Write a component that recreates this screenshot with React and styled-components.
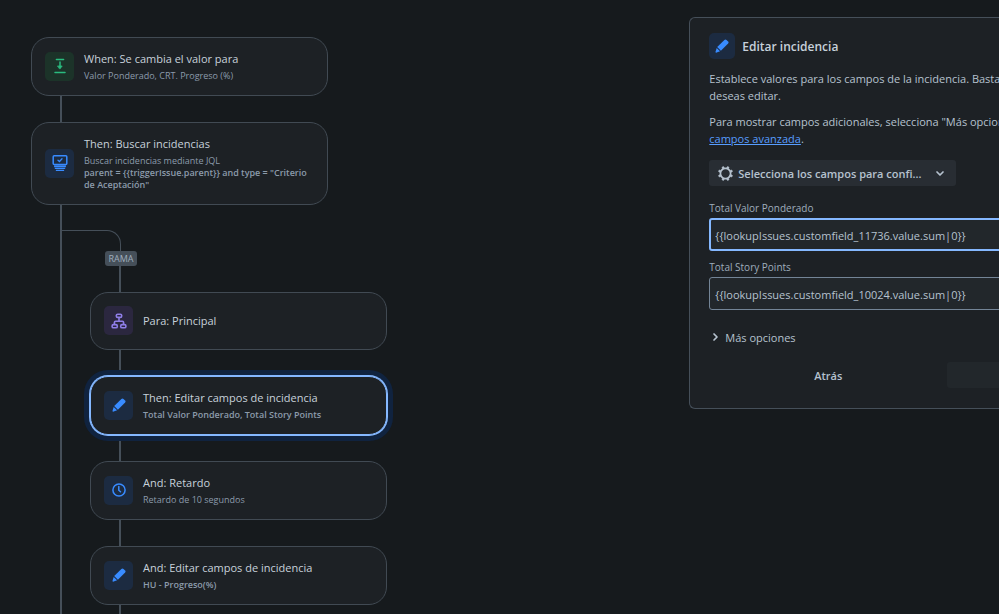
import React, { useState } from 'react';
import styled, { createGlobalStyle, css } from 'styled-components';

const GlobalStyle = createGlobalStyle`
  * {
    box-sizing: border-box;
  }

  body {
    margin: 0;
    background: #161a1d;
    color: #b6c2cf;
    font-family: 'Open Sans', 'Noto Sans', sans-serif;
    font-size: 11px;
  }

  button,
  input {
    font: inherit;
    color: inherit;
  }
`;

const Page = styled.main`
  display: flex;
  align-items: flex-start;
  height: 100vh;
  overflow: hidden;
`;

const Canvas = styled.section`
  flex: 0 0 69%;
  padding: 37px 0 0 31px;
`;

const Connector = styled.div`
  width: 2px;
  height: 26px;
  margin-left: 29px;
  background: #454f59;
`;

const Card = styled.button`
  display: flex;
  align-items: center;
  gap: 10px;
  width: 297px;
  min-height: 58px;
  padding: 12px 13px 13px;
  border: 1px solid #414a53;
  border-radius: 18px;
  background: #1d2125;
  text-align: left;
  cursor: pointer;

  ${props =>
    props.$selected &&
    css`
      position: relative;
      z-index: 1;
      border-color: #85b8ff;
      box-shadow: 0 0 0 1px #85b8ff, 0 0 0 6px #10233f;
    `}
`;

const tones = {
  green: css`
    background: #1c3329;
    color: #2abb7f;
  `,
  blue: css`
    background: #1c2b41;
    color: #388bff;
  `,
  purple: css`
    background: #2b273f;
    color: #8f7ee7;
  `,
};

const IconTile = styled.span`
  display: flex;
  flex: none;
  align-items: center;
  justify-content: center;
  width: ${props => (props.$small ? '26px' : '29px')};
  height: ${props => (props.$small ? '26px' : '29px')};
  border-radius: 5px;
  ${props => tones[props.$tone]}
`;

const CardText = styled.span`
  display: flex;
  flex-direction: column;
  gap: 3px;
`;

const CardTitle = styled.span`
  color: #c7d1db;
  line-height: 17px;
`;

const CardDetail = styled.span`
  color: #8c9bab;
  font-size: 9px;
  line-height: 12px;

  strong {
    display: block;
    font-weight: 600;
    white-space: nowrap;
  }
`;

const Trunk = styled.div`
  height: 100vh;
  margin-left: 29px;
  border-left: 2px solid #454f59;
`;

const Elbow = styled.div`
  width: 59px;
  height: 46px;
  padding-top: 25px;

  &::after {
    content: '';
    display: block;
    height: 21px;
    border-top: 1px solid #454f59;
    border-right: 1px solid #454f59;
    border-top-right-radius: 14px;
  }
`;

const Branch = styled.div`
  padding-left: 28px;
`;

const Badge = styled.span`
  display: block;
  width: 32px;
  height: 15px;
  margin-left: 15px;
  border-radius: 3px;
  background: #454f59;
  color: #9fadbc;
  font-size: 9px;
  line-height: 15px;
  text-align: center;
`;

const Panel = styled.form`
  flex: 1;
  min-width: 0;
  margin-top: 17px;
  padding: 15px 0 20px 19px;
  border: 1px solid #454f59;
  border-right: 0;
  border-radius: 6px 0 0 6px;
  background: #1d2125;
  white-space: nowrap;
  overflow: hidden;
`;

const PanelHeader = styled.header`
  display: flex;
  align-items: center;
  gap: 7px;
  margin-bottom: 11px;
`;

const PanelTitle = styled.h2`
  margin: 0;
  color: #c7d1db;
  font-size: 12px;
  font-weight: 600;
`;

const Paragraph = styled.p`
  margin: 0 0 9px;
  line-height: 17px;

  a {
    color: #579dff;
  }
`;

const FieldPicker = styled.button`
  display: flex;
  align-items: center;
  width: 247px;
  height: 26px;
  margin: 13px 0 14px;
  padding: 0 10px 0 9px;
  border: 0;
  border-radius: 3px;
  background: #282d33;
  color: #b6c2cf;
  font-weight: 600;
  cursor: pointer;

  span {
    flex: 1;
    margin-left: 5px;
    text-align: left;
  }
`;

const Field = styled.div`
  margin-bottom: 8px;
`;

const Label = styled.label`
  display: block;
  margin-bottom: 2px;
  color: #9fadbc;
  font-size: 10px;
  font-weight: 500;
  line-height: 16px;
`;

const Input = styled.input`
  display: block;
  width: calc(100% + 8px);
  height: 33px;
  padding: 1px 5px 0;
  border: 1px solid #738496;
  border-radius: 3px;
  outline: 0;
  background: #22272b;

  ${props =>
    props.$active &&
    css`
      padding: 1px 4px 0;
      border: 2px solid #85b8ff;
    `}
`;

const MoreButton = styled.button`
  display: flex;
  align-items: center;
  gap: 4px;
  height: 26px;
  margin-top: 14px;
  padding: 0;
  border: 0;
  background: none;
  cursor: pointer;
`;

const Footer = styled.footer`
  display: grid;
  grid-template-columns: 238px 1fr;
  margin-top: 12px;
`;

const FooterButton = styled.button`
  height: 26px;
  padding: 0;
  border: 0;
  border-radius: 3px 0 0 3px;
  background: ${props => (props.$filled ? '#22272b' : 'none')};
  font-weight: 600;
`;

function PencilIcon() {
  return (
    <svg width="16" height="16" viewBox="0 0 16 16" fill="currentColor">
      <path d="M10.4 1.9a1.5 1.5 0 0 1 2.1 0l1.6 1.6a1.5 1.5 0 0 1 0 2.1L6.9 12.8 3.2 9.1z" />
      <path d="M2.7 9.9l3.4 3.4-3.4 1.2a.8.8 0 0 1-1.1-1.1z" />
    </svg>
  );
}

function ValueIcon() {
  return (
    <svg width="16" height="18" viewBox="0 0 16 18" fill="none" stroke="currentColor" strokeWidth="1.5" strokeLinecap="round">
      <path d="M4.4 2.4h7.2M8 5v5.5M3 15.6h10" />
      <path d="M5.8 9h4.4L8 11.8z" fill="currentColor" strokeWidth=".8" strokeLinejoin="round" />
    </svg>
  );
}

function LookupIcon() {
  return (
    <svg width="16" height="18" viewBox="0 0 16 18" fill="none" stroke="currentColor" strokeWidth="1.5" strokeLinecap="round">
      <rect x="1.2" y="1.7" width="13.6" height="8.8" rx="1" />
      <path d="M6 6.2l1.5 1.3L10 4.8" strokeWidth="1.3" />
      <path d="M1.8 10.6h12.4l-.8 3.2H2.6z" fill="currentColor" fillOpacity=".6" stroke="none" />
      <path d="M2.6 12.5h10.8M3.3 14.5h9.4M4.4 16.4h7.2" strokeWidth="1.2" />
    </svg>
  );
}

function HierarchyIcon() {
  return (
    <svg width="16" height="16" viewBox="0 0 16 16" fill="none" stroke="currentColor" strokeWidth="1.6">
      <rect x="5.3" y="1.2" width="5.4" height="3.2" rx="1.4" />
      <rect x="1.1" y="11.6" width="5.2" height="3.2" rx="1.4" />
      <rect x="9.7" y="11.6" width="5.2" height="3.2" rx="1.4" />
      <path d="M8 4.4v3.8M3.4 11.8V9.4a1.2 1.2 0 0 1 1.2-1.2h6.8a1.2 1.2 0 0 1 1.2 1.2v2.4" />
    </svg>
  );
}

function ClockIcon() {
  return (
    <svg width="16" height="16" viewBox="0 0 16 16" fill="none" stroke="currentColor" strokeWidth="1.5" strokeLinecap="round">
      <circle cx="8" cy="8" r="6.1" />
      <path d="M7.8 4.6v3.6l1.7 1.6" />
    </svg>
  );
}

function GearIcon() {
  const teeth = [22.5, 67.5, 112.5, 157.5, 202.5, 247.5, 292.5, 337.5];
  return (
    <svg width="15" height="15" viewBox="0 0 16 16" fill="none" stroke="currentColor">
      <circle cx="8" cy="8" r="5.4" strokeWidth="1.8" />
      {teeth.map(angle => (
        <path key={angle} d="M6.8 2.2L7.1 .3h1.8l.3 1.9z" fill="currentColor" strokeWidth=".5" transform={`rotate(${angle} 8 8)`} />
      ))}
    </svg>
  );
}

function Chevron({ d }) {
  return (
    <svg width="12" height="12" viewBox="0 0 12 12" fill="none" stroke="currentColor" strokeWidth="1.7" strokeLinecap="round" strokeLinejoin="round">
      <path d={d} />
    </svg>
  );
}

function RuleCard({ icon, tone, title, detail, selected }) {
  return (
    <Card type="button" $selected={selected}>
      <IconTile $tone={tone}>{icon}</IconTile>
      <CardText>
        <CardTitle>{title}</CardTitle>
        {detail && <CardDetail>{detail}</CardDetail>}
      </CardText>
    </Card>
  );
}

function EditPanel() {
  const [total, setTotal] = useState('{{lookupIssues.customfield_11736.value.sum|0}}');
  const [points, setPoints] = useState('{{lookupIssues.customfield_10024.value.sum|0}}');

  return (
    <Panel>
      <PanelHeader>
        <IconTile $tone="blue" $small>
          <PencilIcon />
        </IconTile>
        <PanelTitle>Editar incidencia</PanelTitle>
      </PanelHeader>
      <Paragraph>
        Establece valores para los campos de la incidencia. Basta
        <br />
        deseas editar.
      </Paragraph>
      <Paragraph>
        Para mostrar campos adicionales, selecciona "Más opciones"
        <br />
        <a href="#campos">campos avanzada</a>.
      </Paragraph>
      <FieldPicker type="button">
        <GearIcon />
        <span>Selecciona los campos para confi...</span>
        <Chevron d="M3 5l3 3 3-3" />
      </FieldPicker>
      <Field>
        <Label htmlFor="total">Total Valor Ponderado</Label>
        <Input id="total" $active value={total} onChange={e => setTotal(e.target.value)} />
      </Field>
      <Field>
        <Label htmlFor="points">Total Story Points</Label>
        <Input id="points" value={points} onChange={e => setPoints(e.target.value)} />
      </Field>
      <MoreButton type="button">
        <Chevron d="M5 3l3 3-3 3" />
        Más opciones
      </MoreButton>
      <Footer>
        <FooterButton type="button">Atrás</FooterButton>
        <FooterButton type="button" $filled aria-label="Guardar" disabled />
      </Footer>
    </Panel>
  );
}

function App() {
  return (
    <>
      <GlobalStyle />
      <Page>
        <Canvas>
          <RuleCard
            icon={<ValueIcon />}
            tone="green"
            title="When: Se cambia el valor para"
            detail="Valor Ponderado, CRT. Progreso (%)"
          />
          <Connector />
          <RuleCard
            icon={<LookupIcon />}
            tone="blue"
            title="Then: Buscar incidencias"
            detail={
              <>
                Buscar incidencias mediante JQL
                <strong>
                  {'parent = {{triggerIssue.parent}} and type = "Criterio'}
                  <br />
                  de Aceptación"
                </strong>
              </>
            }
          />
          <Trunk>
            <Elbow />
            <Branch>
              <Badge>RAMA</Badge>
              <Connector />
              <RuleCard icon={<HierarchyIcon />} tone="purple" title="Para: Principal" />
              <Connector />
              <RuleCard
                icon={<PencilIcon />}
                tone="blue"
                title="Then: Editar campos de incidencia"
                detail={
                  <strong>Total Valor Ponderado, Total Story Points</strong>
                }
                selected
              />
              <Connector />
              <RuleCard
                icon={<ClockIcon />}
                tone="blue"
                title="And: Retardo"
                detail="Retardo de 10 segundos"
              />
              <Connector />
              <RuleCard
                icon={<PencilIcon />}
                tone="blue"
                title="And: Editar campos de incidencia"
                detail={<strong>HU - Progreso(%)</strong>}
              />
              <Connector />
            </Branch>
          </Trunk>
        </Canvas>
        <EditPanel />
      </Page>
    </>
  );
}

export default App;
